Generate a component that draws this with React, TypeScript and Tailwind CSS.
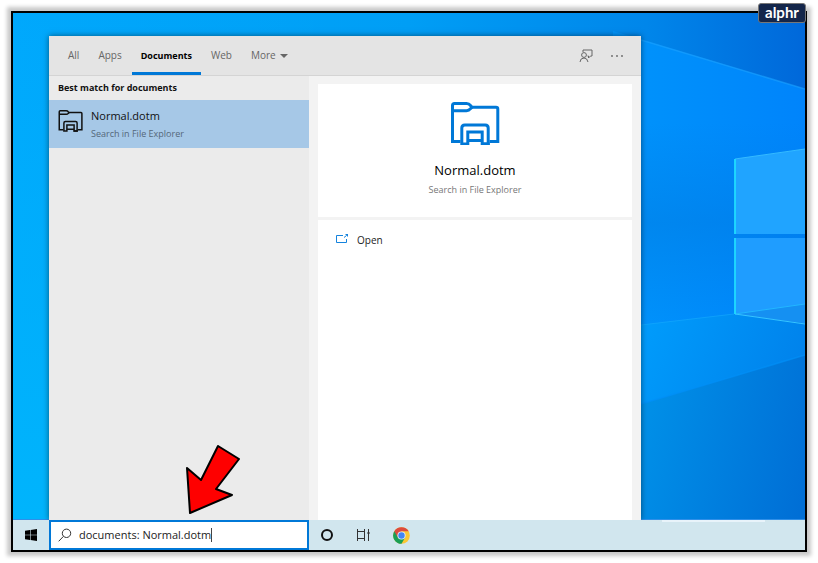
import { useState } from 'react';

const TABS = ['All', 'Apps', 'Documents', 'Web'];

function Wallpaper() {
  return (
    <svg
      className="absolute inset-0 w-full h-full"
      viewBox="0 0 792 507"
      preserveAspectRatio="xMaxYMin slice"
      aria-hidden="true"
    >
      <defs>
        <linearGradient id="sky" x1="0" y1="0" x2="1" y2="0">
          <stop offset="0" stopColor="#00a8fc" />
          <stop offset="0.5" stopColor="#009ef5" />
          <stop offset="0.8" stopColor="#0086ea" />
          <stop offset="1" stopColor="#0068da" />
        </linearGradient>
        <linearGradient id="beam" gradientUnits="userSpaceOnUse" x1="600" y1="0" x2="792" y2="0">
          <stop offset="0" stopColor="#0094fb" />
          <stop offset="1" stopColor="#0084fb" />
        </linearGradient>
        <linearGradient id="floor" gradientUnits="userSpaceOnUse" x1="628" y1="310" x2="792" y2="380">
          <stop offset="0" stopColor="#009cfc" />
          <stop offset="1" stopColor="#0080ea" />
        </linearGradient>
        <linearGradient id="ground" gradientUnits="userSpaceOnUse" x1="628" y1="400" x2="800" y2="440">
          <stop offset="0" stopColor="#0090e8" />
          <stop offset="1" stopColor="#006fd6" />
        </linearGradient>
        <linearGradient id="edge" x1="0" y1="0" x2="0" y2="1">
          <stop offset="0" stopColor="#00b4fc" stopOpacity="0" />
          <stop offset="1" stopColor="#00b4fc" />
        </linearGradient>
        <linearGradient id="middle" x1="0" y1="0" x2="0" y2="1">
          <stop offset="0" stopColor="#0078dc" stopOpacity="0" />
          <stop offset="0.5" stopColor="#0078dc" stopOpacity="0.4" />
          <stop offset="1" stopColor="#0078dc" stopOpacity="0" />
        </linearGradient>
      </defs>
      <rect width="792" height="507" fill="url(#sky)" />
      <rect width="300" height="507" fill="url(#edge)" />
      <path d="M600 18 L792 76 V300 L600 322Z" fill="url(#beam)" />
      <path d="M628 27 L792 76" stroke="#1ca2ff" strokeWidth="1.5" opacity="0.6" />
      <rect x="600" y="110" width="192" height="200" fill="url(#middle)" />
      <path d="M600 316 L628 312 L721 301 L792 310 V507 H600Z" fill="url(#floor)" />
      <path d="M600 400 L628 391 L792 342 V507 H600Z" fill="url(#ground)" />
      <path d="M628 391 L792 342" stroke="#0090f8" strokeWidth="1.5" opacity="0.7" />
      <path d="M628 312 L721 301" stroke="#1ab0ff" strokeWidth="1" opacity="0.5" />
      <path d="M722 146 L792 136 V221 H722Z" fill="#20a4ff" />
      <path d="M722 225 H792 V310 L722 301Z" fill="#1f9dff" />
      <path d="M722 301 L792 291 V310Z" fill="#1590f2" />
      <path d="M722 301 L792 291" stroke="#22b6ff" strokeWidth="1" />
      <path d="M722 146 L792 136" stroke="#34baff" strokeWidth="1" />
      <path d="M722 301 L792 311" stroke="#36c4ff" strokeWidth="1" />
      <path d="M722 146 V221 M722 225 V301" stroke="#1fdcff" strokeWidth="1.8" />
      <rect y="506" width="792" height="1" fill="#2f8fe8" />
    </svg>
  );
}

function ExplorerIcon({ className }: { className: string }) {
  return (
    <svg className={className} viewBox="0 0 50 44" fill="none" stroke="currentColor" aria-hidden="true">
      <path d="M10.500 40.500 H2.500 V4.500 Q2.500 2.500 4.500 2.500 H16.500 Q19 2.500 20.500 4.500 L22 6.200 H46 Q47.800 6.200 47.800 8 V40.500 H39.500" />
      <path d="M2.500 9.700 H16.500 Q19 9.700 20.500 7.700 L22 6.200" />
      <path d="M11.800 43 V27 Q11.800 24 14.800 24 H35.200 Q38.200 24 38.200 27 V43 H32.200 V31 H17.800 V43 H10.300" />
      <path d="M17.800 39.500 H32.200 M31 43 H39.700" />
    </svg>
  );
}

function FeedbackIcon() {
  return (
    <svg className="w-3.5 h-3.5" viewBox="0 0 14 14" fill="none" stroke="currentColor" aria-hidden="true">
      <path d="M4 3 V1 H13 V7 H11.500 L9.500 9 V7 H8.500" />
      <circle cx="5" cy="6" r="2.400" />
      <path d="M1 13 Q1.300 9 5 9 Q8.300 9 9 13" />
    </svg>
  );
}

function ChromeIcon() {
  return (
    <svg className="w-[17px] h-[17px]" viewBox="0 0 48 48" aria-hidden="true">
      <circle cx="24" cy="24" r="23.500" fill="#fbc734" />
      <path d="M24 24 L3.600 12.200 A23.500 23.500 0 0 0 24 47.500 L34.200 29.900Z" fill="#1a9f55" />
      <path d="M24 12.200 H44.400 A23.500 23.500 0 0 0 3.600 12.200 L13.800 29.900 L24 24Z" fill="#dd4b3e" />
      <circle cx="24" cy="24" r="11.500" fill="#e8f1f4" />
      <circle cx="24" cy="24" r="9" fill="#4285f4" />
    </svg>
  );
}

function SearchPanel() {
  const [tab, setTab] = useState('Documents');

  return (
    <section
      aria-label="Search results"
      className="relative flex-1 flex flex-col bg-[#f3f3f3] shadow-[0_0_6px_rgba(0,0,0,0.5)]"
    >
      <header className="h-10 flex items-stretch bg-[#e4e4e4] border-b border-[#d4d4d4] pl-2.5 text-[10px] text-[#666]">
        <nav className="flex gap-px">
          {TABS.map((name) => (
            <button
              key={name}
              type="button"
              onClick={() => setTab(name)}
              className={
                name === tab
                  ? 'px-[9px] border-y-3 border-t-transparent border-b-[#0078d7] text-[9px] font-bold text-black'
                  : 'px-[9px] border-y-3 border-transparent'
              }
            >
              {name}
            </button>
          ))}
          <button type="button" className="px-[9px] flex items-center gap-1">
            More
            <svg className="w-2 h-1" viewBox="0 0 8 4" fill="currentColor" aria-hidden="true">
              <path d="M0 0 H8 L4 4Z" />
            </svg>
          </button>
        </nav>
        <div className="ml-auto flex items-center gap-4 pr-4">
          <button type="button" aria-label="Feedback">
            <FeedbackIcon />
          </button>
          <button type="button" aria-label="Options">
            <svg className="w-4 h-3.5" viewBox="0 0 16 14" fill="currentColor" aria-hidden="true">
              <circle cx="3" cy="7" r="0.900" />
              <circle cx="8" cy="7" r="0.900" />
              <circle cx="13" cy="7" r="0.900" />
            </svg>
          </button>
        </div>
      </header>

      <div className="flex-1 flex">
        <div className="w-[260px] shrink-0 bg-[#ebebeb]">
          <h2 className="h-6 px-[9px] text-[9px] leading-6 font-bold text-[#111]">Best match for documents</h2>
          <button type="button" className="w-full h-12 flex gap-2 px-[9px] pt-2 bg-[#a6c8e7] text-left">
            <ExplorerIcon className="w-[25px] h-[25px] text-[#111] stroke-3" />
            <span className="flex flex-col">
              <span className="text-[11px] leading-4 text-[#111]">Normal.dotm</span>
              <span className="mt-1 text-[9px] leading-3 text-[#546779]">Search in File Explorer</span>
            </span>
          </button>
        </div>

        <div className="flex-1 flex flex-col gap-[3px] pt-2 px-[9px]">
          <div className="h-[133px] flex flex-col items-center pt-[17px] bg-white">
            <ExplorerIcon className="w-[50px] h-11 text-[#0078d7] stroke-3" />
            <h1 className="mt-[17px] text-[13px] leading-4 text-black">Normal.dotm</h1>
            <p className="mt-1 text-[9px] leading-4 text-[#777]">Search in File Explorer</p>
          </div>
          <div className="flex-1 bg-white px-[17px] pt-3">
            <button type="button" className="flex items-center gap-2 text-[10px] leading-4 text-[#222]">
              <svg className="w-3.5 h-3" viewBox="0 0 14 12" fill="none" stroke="#1583dd" aria-hidden="true">
                <path d="M8 1.500 H1.500 V8.500 H11.500 V5" />
                <path d="M9 3.500 L11.500 1.500" />
                <path d="M10 0 H13 V3Z" fill="#1583dd" stroke="none" />
              </svg>
              Open
            </button>
          </div>
        </div>
      </div>
    </section>
  );
}

function Taskbar() {
  return (
    <footer className="relative h-[30px] flex items-stretch bg-[#d1e6ee]">
      <button type="button" aria-label="Start" className="w-9 flex items-center justify-center">
        <svg className="w-3 h-3" viewBox="0 0 12 12" fill="#000" aria-hidden="true">
          <path d="M0 1.700 L5 1 V5.700 H0Z M5.600 0.900 L12 0 V5.700 H5.600Z M0 6.300 H5 V11 L0 10.300Z M5.600 6.300 H12 V12 L5.600 11.100Z" />
        </svg>
      </button>
      <label className="w-[260px] flex items-center bg-white border-2 border-[#0078d7] pl-[7px]">
        <svg className="w-3.5 h-3.5 mr-[7px]" viewBox="0 0 14 14" fill="none" stroke="#333" aria-hidden="true">
          <circle cx="8.500" cy="5.300" r="4.200" />
          <path d="M5.500 8.300 L0.700 13.300" />
        </svg>
        <input
          type="text"
          aria-label="Search"
          defaultValue="documents: Normal.dotm"
          className="field-sizing-content text-[11px] leading-4 text-[#222] outline-none"
        />
        <span className="w-px h-3.5 bg-[#444]" />
      </label>
      <div className="flex items-center gap-[23px] pl-3">
        <button type="button" aria-label="Cortana">
          <svg className="w-3 h-3" viewBox="0 0 12 12" fill="none" stroke="#111" strokeWidth="2" aria-hidden="true">
            <circle cx="6" cy="6" r="5" />
          </svg>
        </button>
        <button type="button" aria-label="Task view">
          <svg className="w-3.5 h-3.5" viewBox="0 0 14 14" fill="none" stroke="#333" aria-hidden="true">
            <path d="M1.500 1 V13 M8.500 1 V13 M1.500 3.500 H8.500 M1.500 10.500 H8.500 M12.500 1 V13" />
            <path d="M11.500 5 H13.500" strokeWidth="2" />
          </svg>
        </button>
        <button type="button" aria-label="Chrome">
          <ChromeIcon />
        </button>
      </div>
      <span className="absolute top-0 right-10 w-[103px] h-0.5 bg-[#e8f3fa]" />
    </footer>
  );
}

export default function App() {
  return (
    <main className="relative min-h-screen flex flex-col bg-white p-[11px] font-['Open_Sans','Noto_Sans',sans-serif]">
      <div className="flex-1 flex flex-col border-2 border-black shadow-[0_0_4px_4px_#c8c8c8]">
        <div className="relative flex-1 flex pt-[23px] pl-9 pr-[164px] overflow-hidden">
          <Wallpaper />
          <SearchPanel />
          <svg className="absolute left-[171px] bottom-1 w-[58px] h-[72px]" viewBox="0 0 58 72" aria-hidden="true">
            <path
              d="M34 2 L55 15 L32 45 L48 51 L6 69 L3 24 L17 36Z"
              fill="#fe0000"
              stroke="#000"
              strokeWidth="2"
              strokeLinejoin="round"
            />
          </svg>
        </div>
        <Taskbar />
      </div>
      <div className="absolute top-[3px] right-3 w-12 h-5 flex justify-center rounded-[3px] border border-[#777] bg-[#14264a] font-['Lato',sans-serif] font-bold text-[15px] leading-4 text-white">
        alphr
      </div>
    </main>
  );
}
